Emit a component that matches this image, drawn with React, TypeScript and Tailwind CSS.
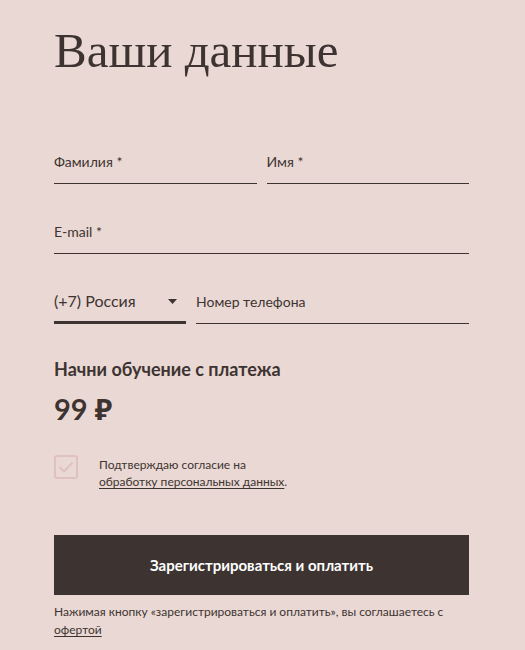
import React from "react"

function Field({ label, className = "" }: { label: string; className?: string }) {
  return (
    <div className={`flex h-[44px] items-end border-b border-[#3d3431] pb-[14px] ${className}`}>
      <span className="text-[14px] leading-none text-[#3d3431]">{label}</span>
    </div>
  )
}

export default function App() {
  return (
    <div
      className="min-h-[650px] w-[525px] bg-[#ead8d4] pl-[54px] pr-[56px] pt-[24px] text-[#3d3431]"
      style={{ fontFamily: "Lato, 'Noto Sans', sans-serif" }}
    >
      <h1
        className="text-[49px] leading-[54px] text-[#3d3431]"
        style={{ fontFamily: "'Liberation Serif', serif" }}
      >
        Ваши данные
      </h1>

      <div className="mt-[62px] flex gap-[10px]">
        <Field label="Фамилия *" className="flex-1" />
        <Field label="Имя *" className="flex-1" />
      </div>

      <Field label="E-mail *" className="mt-[26px]" />

      <div className="mt-[26px] flex gap-[10px]">
        <div className="flex h-[44px] w-[132px] items-end justify-between border-b-[3px] border-[#3d3431] pb-[12px]">
          <span className="text-[16px] leading-none">(+7) Россия</span>
          <svg width="9" height="5" viewBox="0 0 9 5" className="mb-[5px] mr-[9px]">
            <path d="M0 0h9L4.5 5z" fill="#3d3431" />
          </svg>
        </div>
        <Field label="Номер телефона" className="flex-1" />
      </div>

      <div className="mt-[36px] text-[18px] font-bold leading-none">Начни обучение с платежа</div>
      <div className="mt-[16px] text-[29px] font-bold leading-none">99 ₽</div>

      <div className="mt-[33px] flex items-start gap-[21px]">
        <div className="mt-[-1px] flex h-[24px] w-[24px] items-center justify-center rounded-[3px] border-2 border-[#dfc2bd]">
          <svg width="16" height="12" viewBox="0 0 16 12" fill="none">
            <path d="M1.5 6l4.5 4.5L14.5 1.5" stroke="#dfc2bd" strokeWidth="2" />
          </svg>
        </div>
        <div className="text-[12px] leading-[17px]">
          Подтверждаю согласие на
          <br />
          <span className="underline underline-offset-2">обработку персональных данных</span>.
        </div>
      </div>

      <button className="mt-[45px] flex h-[60px] w-full items-center justify-center bg-[#3d3431] text-[15px] font-bold text-white">
        Зарегистрироваться и оплатить
      </button>

      <div className="mt-[8px] text-[12px] leading-[18px]">
        Нажимая кнопку «зарегистрироваться и оплатить», вы соглашаетесь с
        <br />
        <span className="underline underline-offset-2">офертой</span>
      </div>
    </div>
  )
}
